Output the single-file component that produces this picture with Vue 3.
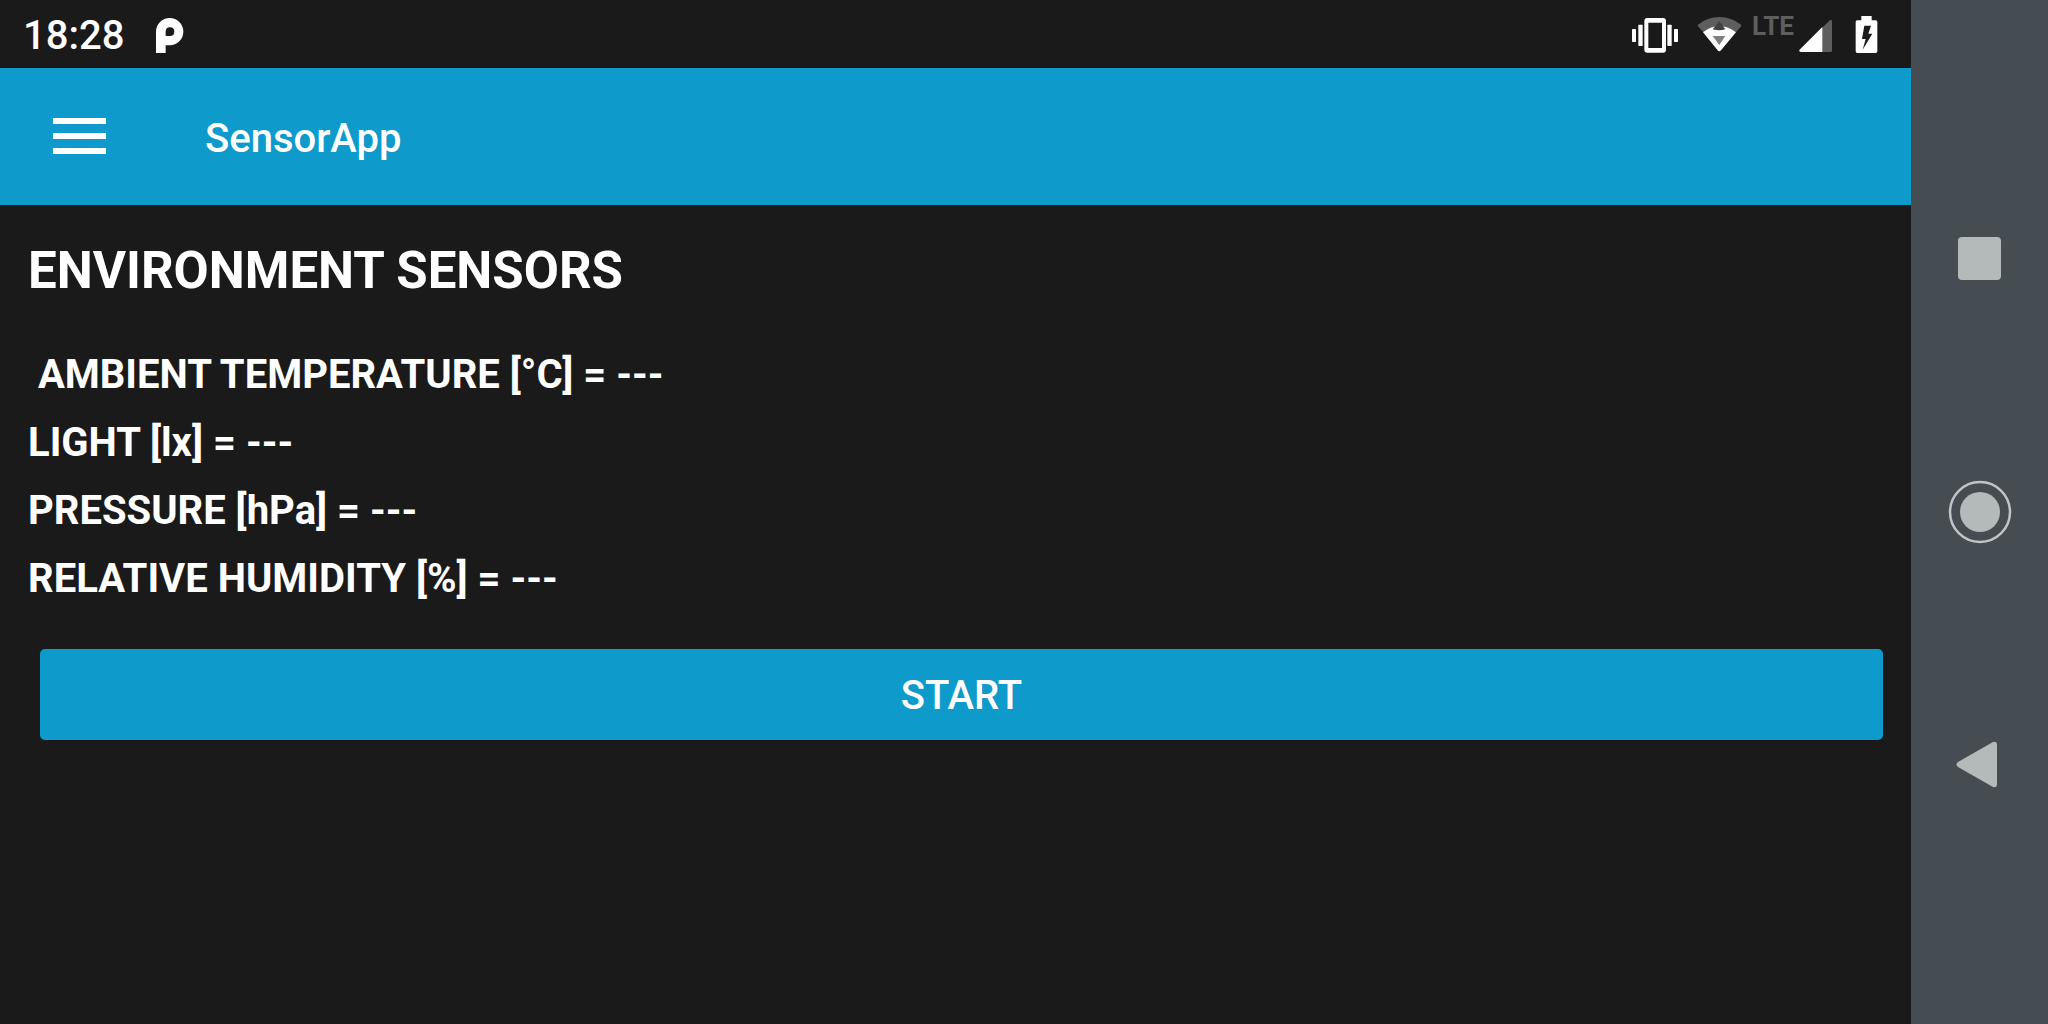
<script setup>
import { ref } from 'vue'

const running = ref(false)
const readings = [
  ' AMBIENT TEMPERATURE [°C] = ---',
  'LIGHT [lx] = ---',
  'PRESSURE [hPa] = ---',
  'RELATIVE HUMIDITY [%] = ---',
]
</script>

<template>
  <div class="device">
    <div class="screen">
      <div class="status">
        <time class="clock">18:28</time>
        <svg class="notification" width="30" height="39" viewBox="465 42 90 117" aria-hidden="true">
          <path fill="#fff" fill-rule="evenodd" d="M468 156V92A41 41 0 1 1 509 133H497V156ZM497 105V91A13 13 0 1 1 510 105Z" />
        </svg>

        <svg class="vibrate" width="48" height="39" viewBox="60 42 144 117" aria-hidden="true">
          <path fill="#fff" fill-rule="evenodd" d="M109 51H156Q165 51 165 60V146Q165 155 156 155H109Q100 155 100 146V60Q100 51 109 51ZM112 65V141H153V65Z" />
          <g fill="#fff">
            <rect x="63" y="84" width="12" height="39" rx="2" />
            <rect x="82" y="71" width="13" height="64" rx="2" />
            <rect x="169" y="71" width="13" height="64" rx="2" />
            <rect x="189" y="84" width="12" height="39" rx="2" />
          </g>
        </svg>
        <svg class="wifi" width="45" height="39" viewBox="258 42 135 117" aria-hidden="true">
          <path fill="#5e5e5e" d="M261 71Q289 48 325 48T390 71Q392 74 389 77L375 94Q325 58 277 94L262 77Q259 74 261 71Z" />
          <path fill="#fff" d="M276 94Q325 56 375 94L330 148Q325 154 320 148Z" />
          <path fill="#404040" d="M325 61L343 85Q334 88 325 88T305 85Z" />
          <path fill="#808080" d="M305 105H343L325 132Z" />
        </svg>
        <span class="network">LTE</span>
        <svg class="signal" width="35" height="39" viewBox="564 42 105 117" aria-hidden="true">
          <path fill="#5e5e5e" d="M636 81L658 59Q666 53 666 62V149Q666 153 661 153H636Z" />
          <path fill="#fff" d="M637 78V153H572Q566 152 568 147Z" />
        </svg>
        <svg class="battery" width="23" height="39" viewBox="735 42 69 117" aria-hidden="true">
          <path fill="#fff" d="M754 45H785V58H797Q802 58 802 63V151Q802 156 797 156H742Q737 156 737 151V63Q737 58 742 58H754Z" />
          <path fill="#1a1a1a" d="M763 74H783L775 98H787L758 146L767 114H756Z" />
        </svg>
      </div>

      <header class="appbar">
        <button class="menu" type="button" aria-label="Open menu">
          <svg width="54" height="40" viewBox="0 0 54 40" aria-hidden="true">
            <path fill="#fff" d="M0 1H53V7H0ZM0 16H53V22H0ZM0 31H53V37H0Z" />
          </svg>
        </button>
        <span class="title">SensorApp</span>
      </header>

      <main class="content">
        <h1>ENVIRONMENT SENSORS</h1>
        <p v-for="reading in readings" :key="reading" class="reading">{{ reading }}</p>
        <button class="start" type="button" @click="running = !running">START</button>
      </main>
    </div>

    <nav class="navigation" aria-label="System navigation">
      <button type="button" aria-label="Recent apps">
        <svg width="64" height="64" viewBox="0 0 64 64" aria-hidden="true">
          <rect x="10" y="10" width="43" height="43" rx="4" fill="#b4b9ba" />
        </svg>
      </button>
      <button type="button" aria-label="Home">
        <svg width="64" height="64" viewBox="0 0 64 64" aria-hidden="true">
          <circle cx="32" cy="32" r="30" fill="none" stroke="#c0c4c5" stroke-width="2.500" />
          <circle cx="32" cy="32" r="20" fill="#b4b9ba" />
        </svg>
      </button>
      <button type="button" aria-label="Back">
        <svg width="64" height="64" viewBox="0 0 64 64" aria-hidden="true">
          <path fill="#b4b9ba" d="M10 29L45 9Q49 8 49 12V51Q49 55 45 54L10 34Q7 31.500 10 29Z" />
        </svg>
      </button>
    </nav>
  </div>
</template>

<style>
body {
  margin: 0;
  background: #1a1a1a;
}
</style>

<style scoped>
.device {
  display: flex;
  min-height: 100vh;
  background: #1a1a1a;
  color: #fff;
  font-family: Roboto, sans-serif;
  font-size: 40px;
  line-height: 68px;
}

svg {
  display: block;
}

button {
  padding: 0;
  border: 0;
  background: none;
  color: inherit;
  font: inherit;
  cursor: pointer;
}

.screen {
  flex: 1;
  min-width: 0;
}

.status {
  display: flex;
  align-items: center;
  height: 68px;
  padding: 0 33px 0 23px;
}

.clock {
  padding-top: 4px;
  font-weight: 500;
}

.notification {
  margin-left: 31px;
  margin-right: auto;
}

.wifi {
  margin-left: 18px;
}

.network {
  align-self: flex-start;
  margin-left: 10px;
  color: #5e5e5e;
  font-size: 26px;
  font-weight: 700;
  line-height: 52px;
}

.signal {
  margin-left: 4px;
}

.battery {
  margin-left: 22px;
}

.appbar {
  display: flex;
  align-items: center;
  height: 137px;
  padding-left: 53px;
  background: #0e9acb;
}

.title {
  margin-left: 98px;
  padding-top: 4px;
  font-weight: 500;
}

.content {
  display: flex;
  flex-direction: column;
  padding: 32px 28px;
}

h1 {
  margin: 0 0 36px;
  font-size: 51px;
  font-weight: 700;
  line-height: 68px;
}

.reading {
  margin: 0;
  font-weight: 700;
  white-space: pre;
}

.start {
  height: 91px;
  margin: 36px 0 0 12px;
  padding-top: 2px;
  border-radius: 5px;
  background: #0e9acb;
  font-weight: 500;
}

.navigation {
  display: flex;
  flex: 0 0 137px;
  flex-direction: column;
  box-sizing: border-box;
  padding: 132px 0;
  background: #454c52;
}

.navigation button {
  display: flex;
  flex: 1;
  align-items: center;
  justify-content: center;
}
</style>
